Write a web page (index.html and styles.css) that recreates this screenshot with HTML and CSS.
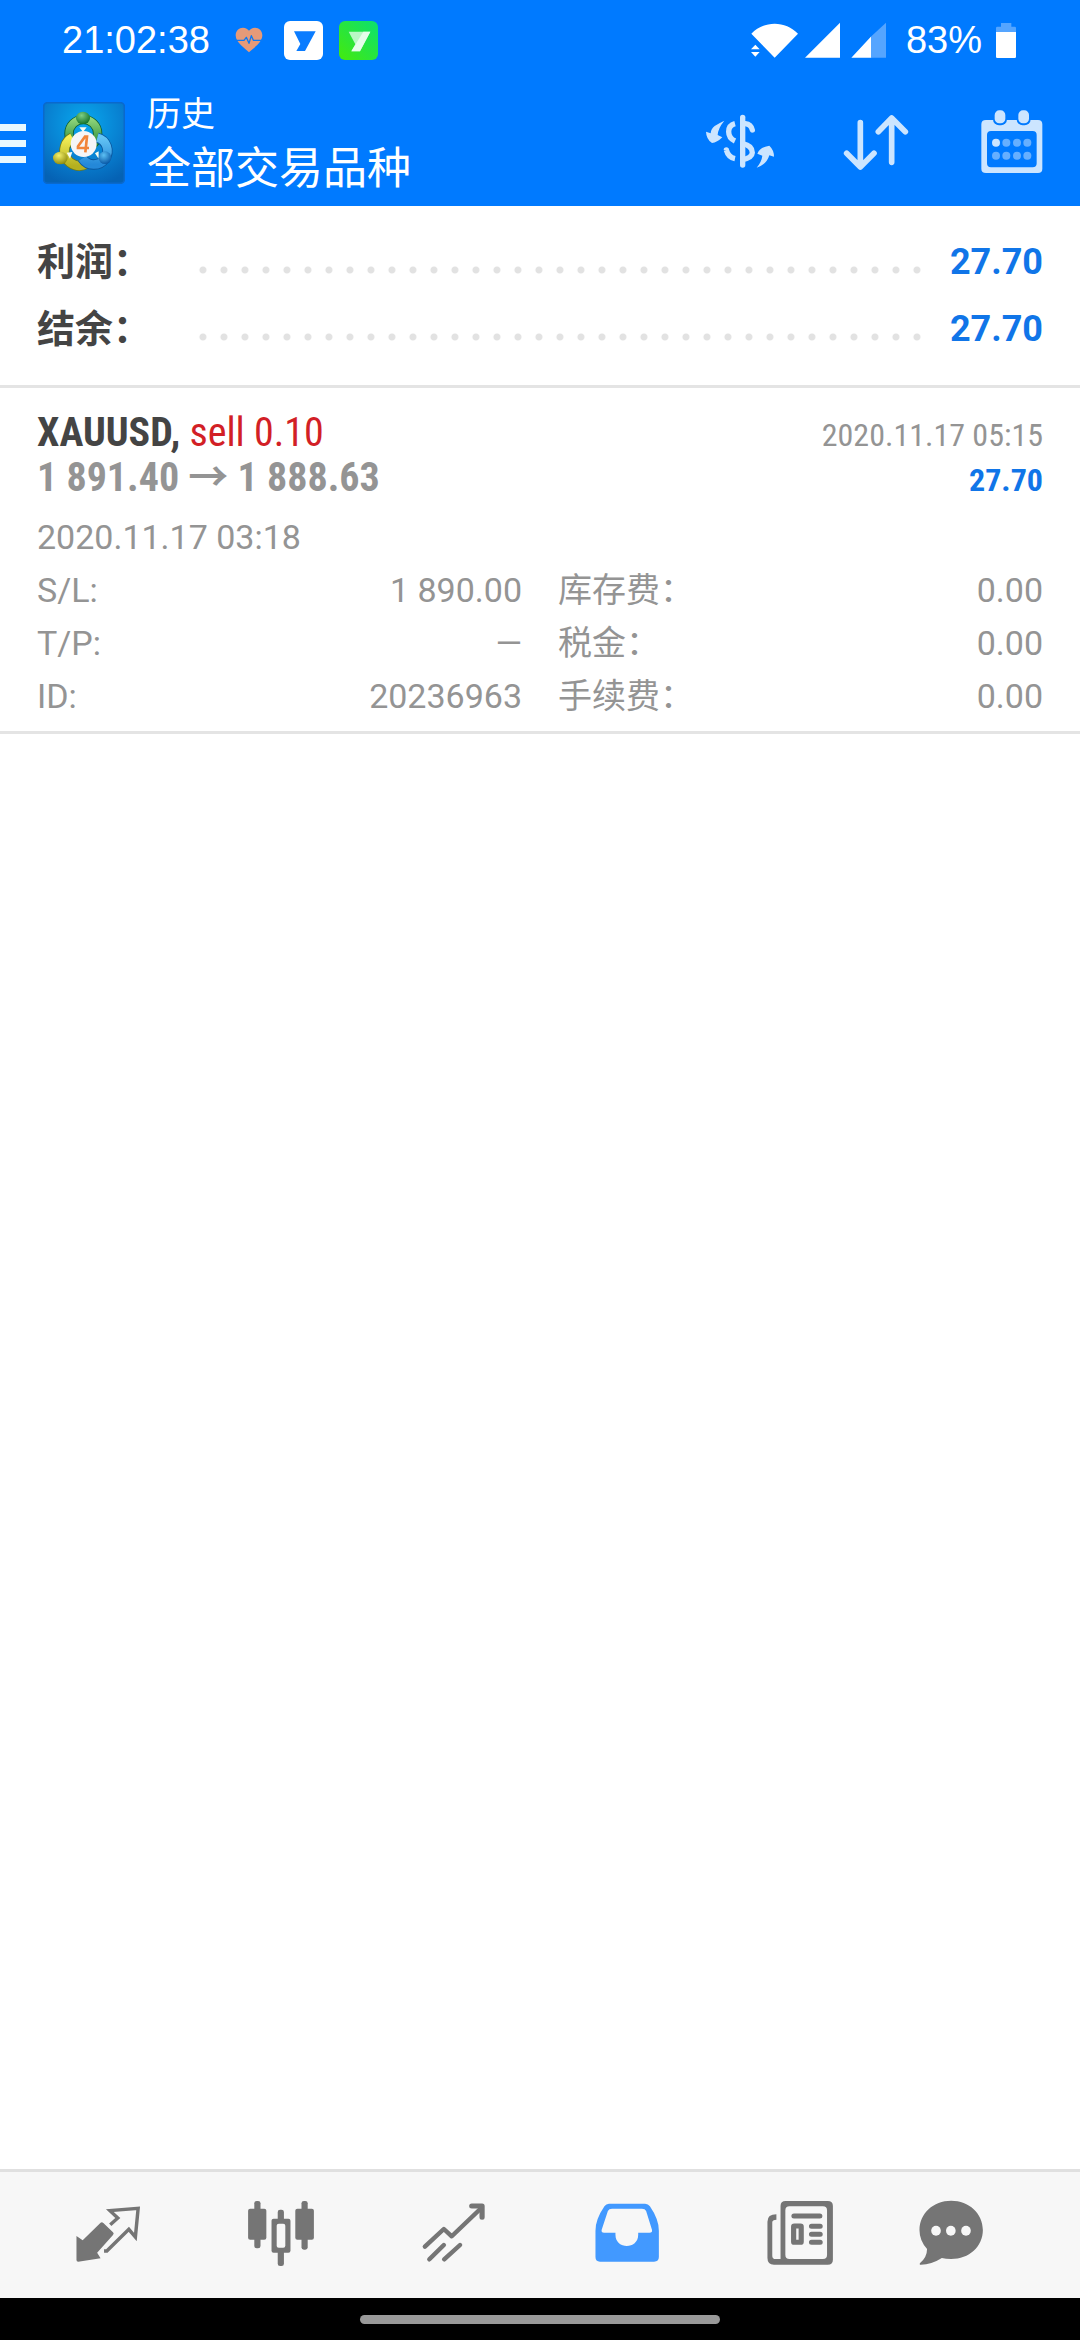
FILE: index.html
```html
<!DOCTYPE html>
<html lang="zh-CN">
<head>
<meta charset="utf-8">
<meta name="viewport" content="width=device-width, initial-scale=1">
<title>历史</title>
<link rel="stylesheet" href="styles.css">
</head>
<body>
<div class="screen">
  <header class="top">
    <div class="status">
      <time class="clock">21:02:38</time>
      <svg class="heart" viewBox="705 78 84 84" aria-hidden="true">
        <path fill="#e59a78" d="M747 157C735 145 707 128 707 106C707 92 717 83 729 83C737 83 744 88 747 92C750 88 757 83 765 83C777 83 787 92 787 106C787 128 759 145 747 157Z"/>
        <path fill="none" stroke="#0a79f5" stroke-width="4" stroke-linejoin="round" d="M705 121H732L739 112L747 130L754 107L760 121H789"/>
      </svg>
      <svg class="app-badge" viewBox="852 60 117 117" aria-hidden="true">
        <rect x="852" y="60" width="117" height="117" rx="18" fill="#fff"/>
        <path fill="#0a7cff" d="M882 91H947L915 150H889L901 129Z"/>
      </svg>
      <svg class="app-badge" viewBox="1017 60 117 117" aria-hidden="true">
        <defs><linearGradient id="lime" x1="1" y1="0" x2="0" y2="1"><stop offset="0" stop-color="#0be070"/><stop offset="1" stop-color="#44ea0c"/></linearGradient></defs>
        <rect x="1017" y="60" width="117" height="117" rx="18" fill="url(#lime)"/>
        <path fill="#b9f8c4" d="M1046 92H1111L1080 151H1054L1066 130Z"/>
        <path fill="#e6fdea" d="M1090 92H1111L1080 151H1054Z"/>
      </svg>
      <svg class="signals" viewBox="207 60 411 120" aria-hidden="true">
        <path fill="#fff" d="M211 101C248 61 314 61 351 101L281 173ZM372 173L477 68V173ZM511 173L571 109V173Z"/>
        <path fill="#007aff" d="M207 131H238L250 152L240 174H207Z"/>
        <path fill="#fff" d="M210 148L223 134L236 148ZM210 156H236L223 170Z"/>
        <path fill="#55a5ff" d="M571 109L615 68V173H571Z"/>
      </svg>
      <span class="percent">83%</span>
      <svg class="battery" viewBox="945 63 60 111" aria-hidden="true">
        <path fill="#55a5ff" d="M960 66H991V77H1001Q1005 77 1005 81V93H945V81Q945 77 949 77H960Z"/>
        <path fill="#fff" d="M945 93H1005V167Q1005 171 1001 171H949Q945 171 945 167Z"/>
      </svg>
    </div>
    <div class="appbar">
      <button class="menu" type="button" aria-label="菜单">
        <span class="burger"></span>
        <svg class="logo" viewBox="40 36 246 246" aria-hidden="true">
          <defs>
            <radialGradient id="tile" cx=".5" cy=".25" r=".8"><stop offset="0" stop-color="#08a8ee"/><stop offset=".6" stop-color="#087fd0"/><stop offset="1" stop-color="#0562b4"/></radialGradient>
            <linearGradient id="green" x1="0" y1="0" x2="0" y2="1"><stop offset="0" stop-color="#8fd479"/><stop offset="1" stop-color="#198232"/></linearGradient>
            <linearGradient id="yellow" x1="0" y1="0" x2="0" y2="1"><stop offset="0" stop-color="#f3ee57"/><stop offset="1" stop-color="#b5b01f"/></linearGradient>
            <linearGradient id="sky" x1="0" y1="0" x2="0" y2="1"><stop offset="0" stop-color="#64c4f5"/><stop offset="1" stop-color="#2488d8"/></linearGradient>
            <radialGradient id="greenBall" cx=".4" cy=".3" r=".7"><stop offset="0" stop-color="#7fcf84"/><stop offset="1" stop-color="#147329"/></radialGradient>
            <radialGradient id="yellowBall" cx=".4" cy=".3" r=".7"><stop offset="0" stop-color="#f5f06a"/><stop offset="1" stop-color="#908d10"/></radialGradient>
            <radialGradient id="blueBall" cx=".4" cy=".3" r=".7"><stop offset="0" stop-color="#5cc0f4"/><stop offset="1" stop-color="#0a5aa8"/></radialGradient>
          </defs>
          <rect x="42" y="38" width="242" height="242" rx="12" fill="url(#tile)" stroke="#0a69cc" stroke-width="5"/>
          <circle cx="161" cy="131" r="43" fill="none" stroke="#0f5c2c" stroke-width="28"/>
          <circle cx="161" cy="131" r="43" fill="none" stroke="url(#green)" stroke-width="23"/>
          <path d="M170 222A44 44 0 1 1 128 143" fill="none" stroke="#6d7a19" stroke-width="31"/>
          <path d="M170 222A44 44 0 1 1 128 143" fill="none" stroke="url(#yellow)" stroke-width="26"/>
          <path d="M158 205A41 41 0 1 0 203 143" fill="none" stroke="#0a579f" stroke-width="31"/>
          <path d="M158 205A41 41 0 1 0 203 143" fill="none" stroke="url(#sky)" stroke-width="26"/>
          <path d="M149 112H171L160 126ZM111 188L121 206L128 186ZM207 184L196 190L207 206Z" fill="#f7fbef"/>
          <ellipse cx="160" cy="84" rx="21" ry="19" fill="url(#greenBall)"/>
          <ellipse cx="92" cy="204" rx="22" ry="19" fill="url(#yellowBall)"/>
          <ellipse cx="226" cy="203" rx="19" ry="19" fill="url(#blueBall)"/>
          <circle cx="162" cy="162" r="39" fill="#f5f5f7"/>
          <path d="M167 187L172 140H166L145 169V174H178" fill="none" stroke="#f1843a" stroke-width="8"/>
        </svg>
      </button>
      <h1 class="heading"><small>历史</small><span>全部交易品种</span></h1>
      <button class="action" type="button" aria-label="品种">
        <svg viewBox="72 321 216 216" fill="none" stroke="#cce5ff" stroke-width="16" stroke-linecap="round" aria-hidden="true">
          <path d="M188 352V495"/>
          <path stroke-linecap="butt" d="M165 371Q146 376 146 395Q146 414 165 423M165 476Q145 472 139 450"/>
          <path d="M196 371Q213 373 217 390"/>
          <path stroke-linecap="butt" d="M188 431Q217 437 217 458Q216 473 188 479"/>
          <path fill="#cce5ff" stroke="none" d="M139 450m-8 0a8 8 0 0 1 16 0ZM133 362Q116 370 104 378Q93 386 92 400L78 395Q79 418 96 429Q111 428 127 412L113 405Q114 385 133 362ZM232 461Q240 441 268 437Q282 450 282 470L268 466Q260 494 230 503Q245 485 247 467Z"/>
        </svg>
      </button>
      <button class="action" type="button" aria-label="排序">
        <svg viewBox="480 321 216 216" fill="none" stroke="#cce5ff" stroke-width="17" stroke-linecap="round" stroke-linejoin="round" aria-hidden="true">
          <path d="M541 368V500M500 460L541 501L582 460M635 487V355M595 395L635 354L676 395"/>
        </svg>
      </button>
      <button class="action" type="button" aria-label="日期">
        <svg viewBox="890 321 216 216" aria-hidden="true">
          <path fill="#cce5ff" fill-rule="evenodd" d="M920 360H1076Q1089 360 1089 373V506Q1089 519 1076 519H920Q906 519 906 506V373Q906 360 920 360ZM935 393Q923 393 923 405V490Q923 502 935 502H1060Q1072 502 1072 490V405Q1072 393 1060 393Z"/>
          <rect x="941" y="327" width="42" height="49" rx="18" fill="#007aff"/>
          <rect x="1012" y="327" width="42" height="49" rx="18" fill="#007aff"/>
          <rect x="946" y="331" width="32" height="39" rx="14" fill="#cce5ff"/>
          <rect x="1017" y="331" width="32" height="39" rx="14" fill="#cce5ff"/>
          <circle cx="950" cy="428" r="12" fill="#cce5ff"/>
          <g fill="#66afff"><circle cx="981" cy="428" r="12"/><circle cx="1013" cy="428" r="12"/><circle cx="1044" cy="428" r="12"/><circle cx="950" cy="467" r="12"/><circle cx="981" cy="467" r="12"/><circle cx="1013" cy="467" r="12"/><circle cx="1044" cy="467" r="12"/></g>
        </svg>
      </button>
    </div>
  </header>

  <main class="content">
    <dl class="summary">
      <div class="summary-row"><dt>利润：</dt><dd>27.70</dd></div>
      <div class="summary-row"><dt>结余：</dt><dd>27.70</dd></div>
    </dl>
    <article class="deal">
      <div class="deal-line">
        <h2 class="symbol">XAUUSD, <span class="side">sell 0.10</span></h2>
        <time class="closed">2020.11.17 05:15</time>
      </div>
      <div class="deal-line">
        <span class="prices">1 891.40 <span class="arrow">→</span> 1 888.63</span>
        <span class="profit">27.70</span>
      </div>
      <div class="details">
        <time class="opened">2020.11.17 03:18</time>
        <dl class="fields">
          <div class="field"><dt>S/L:</dt><dd>1 890.00</dd></div>
          <div class="field"><dt>库存费：</dt><dd>0.00</dd></div>
          <div class="field"><dt>T/P:</dt><dd>—</dd></div>
          <div class="field"><dt>税金：</dt><dd>0.00</dd></div>
          <div class="field"><dt>ID:</dt><dd>20236963</dd></div>
          <div class="field"><dt>手续费：</dt><dd>0.00</dd></div>
        </dl>
      </div>
    </article>
  </main>

  <nav class="tabs">
    <button class="tab" type="button" aria-label="行情">
      <svg viewBox="208 142 209 216" preserveAspectRatio="none" aria-hidden="true">
        <path fill="#757575" d="M221 256L239 269L291 216Q295 213 299 217L327 245Q331 249 327 253L281 306L291 323L226 333Q221 333 221 328Z"/>
        <path fill="none" stroke="#757575" stroke-width="10" d="M319 222L341 202L318 180L400 173L392 259L373 236L309 301H301"/>
      </svg>
    </button>
    <button class="tab" type="button" aria-label="图表">
      <svg viewBox="709 142 209 216" preserveAspectRatio="none" fill="#757575" aria-hidden="true">
        <rect x="736" y="151" width="18" height="142" rx="7"/><rect x="718" y="174" width="53" height="93" rx="6"/>
        <rect x="873" y="151" width="18" height="146" rx="7"/><rect x="855" y="174" width="54" height="93" rx="6"/>
        <rect x="804" y="177" width="18" height="169" rx="7"/><rect x="786" y="204" width="55" height="102" rx="6"/>
        <rect x="801" y="219" width="25" height="72" rx="6" fill="#f7f7f7"/>
      </svg>
    </button>
    <button class="tab" type="button" aria-label="交易">
      <svg viewBox="1212 142 209 216" preserveAspectRatio="none" fill="none" stroke="#757575" stroke-width="13" stroke-linecap="round" stroke-linejoin="round" aria-hidden="true">
        <path d="M1232 288L1287 235L1310 257L1395 173M1245 326L1287 283M1288 326L1334 283"/>
        <path stroke-width="15" d="M1368 166H1398V200"/>
      </svg>
    </button>
    <button class="tab" type="button" aria-label="历史" aria-current="page">
      <svg viewBox="149 142 209 216" preserveAspectRatio="none" aria-hidden="true">
        <path fill="#4299ff" fill-rule="evenodd" d="M201 159H306Q315 159 320 167Q346 206 346 240V319Q346 333 332 333H175Q162 333 162 319V240Q162 206 188 167Q193 159 201 159ZM210 174Q201 174 198 181L180 237Q178 246 187 246H220V252C220 297 286 297 286 252V246H319Q328 246 326 237L309 181Q306 174 297 174Z"/>
      </svg>
    </button>
    <button class="tab" type="button" aria-label="新闻">
      <svg viewBox="655 142 209 216" preserveAspectRatio="none" fill="none" stroke="#757575" stroke-width="14" aria-hidden="true">
        <path fill="#757575" fill-rule="evenodd" stroke="none" d="M718 151H840Q855 151 855 166V327Q855 342 840 342H684Q665 342 665 322V213Q665 191 691 191V207Q679 207 679 215V315Q679 325 689 325H703V166Q703 151 718 151ZM729 167Q717 167 717 179V312Q717 325 729 325H826Q838 325 838 312V179Q838 167 826 167Z"/>
        <path stroke-linecap="round" stroke-width="15" d="M742 196H817M793 227H818M793 251H818M793 275H818"/>
        <rect x="741" y="226" width="22" height="49" rx="2" stroke-width="15"/>
      </svg>
    </button>
    <button class="tab" type="button" aria-label="聊天">
      <svg viewBox="1089 142 209 216" preserveAspectRatio="none" aria-hidden="true">
        <path fill="#757575" d="M1194 150C1246 150 1286 188 1286 238S1246 325 1194 325Q1178 325 1167 322Q1135 343 1103 342V338Q1124 320 1124 295Q1102 270 1102 238C1102 188 1142 150 1194 150Z"/>
        <g fill="#f7f7f7"><ellipse cx="1150" cy="240" rx="14" ry="15"/><ellipse cx="1193" cy="240" rx="14" ry="15"/><ellipse cx="1237" cy="240" rx="14" ry="15"/></g>
      </svg>
    </button>
  </nav>
  <div class="system"><span class="handle"></span></div>
</div>
</body>
</html>
```

FILE: styles.css
```css
* { box-sizing: border-box; }

body {
  margin: 0;
  background: #fff;
  color: #949494;
  font-family: Roboto, "Noto Sans CJK SC", sans-serif;
}

h1, h2, dl, dd { margin: 0; font-weight: 400; }

button {
  display: flex;
  align-items: center;
  justify-content: center;
  padding: 0;
  border: 0;
  background: none;
}

svg { display: block; flex: none; }

.screen {
  display: flex;
  flex-direction: column;
  min-height: 100vh;
}

/* Header */
.top {
  background: #007aff;
  color: #fff;
}

.status {
  display: flex;
  align-items: center;
  height: 80px;
  padding: 0 64px 0 62px;
  font: 38px/80px "Liberation Sans", Arial, sans-serif;
}

.heart { width: 28px; height: 28px; margin-left: 25px; }
.app-badge { width: 39px; height: 39px; margin-left: 16px; }
.heart + .app-badge { margin-left: 21px; }
.signals { width: 137px; height: 40px; margin-left: auto; }
.percent { margin: 0 14px 0 19px; }
.battery { width: 20px; height: 37px; }

.appbar {
  display: flex;
  align-items: center;
  height: 126px;
}

.menu { gap: 17px; }

.burger {
  width: 26px;
  height: 39px;
  border: solid #e8f8ff;
  border-width: 7px 0;
  background: linear-gradient(#e8f8ff, #e8f8ff) center / 26px 7px no-repeat;
}

.logo { width: 82px; height: 82px; }

.heading {
  display: flex;
  flex: 1;
  flex-direction: column;
  gap: 2px;
  margin-left: 22px;
  padding-top: 2px;
  font-size: 44px;
  line-height: 58px;
}

.heading small { font-size: 34px; line-height: 48px; }

.action { width: 136px; height: 126px; }
.action svg, .tab svg { width: 72px; height: 72px; }

/* Totals */
.content { flex: 1; }

.summary {
  padding: 23px 37px 22px;
  border-bottom: 3px solid #e4e4e4;
  font-size: 38px;
  line-height: 67px;
}

.summary-row { display: flex; }

.summary-row dt {
  min-width: 155px;
  color: #444;
  font-weight: 700;
}

.summary-row dd {
  display: flex;
  flex: 1;
  gap: 22px;
  color: #1075e8;
  font-size: 36px;
  font-weight: 700;
}

.summary-row dd::before {
  content: "";
  flex: 1;
  background: radial-gradient(circle at 10px 41px, #e2e2e2 3px, transparent 4px) right top / 21px 67px repeat-x;
}

/* Closed deal */
.deal {
  padding: 22px 37px 8px;
  border-bottom: 3px solid #e4e4e4;
}

.deal-line {
  display: flex;
  align-items: baseline;
  justify-content: space-between;
  height: 45px;
  font: 40px/45px "Roboto Condensed", "Liberation Sans Narrow", Roboto, "Noto Sans CJK SC", sans-serif;
}

.symbol { color: #444; font-size: 40px; font-weight: 700; }
.side { color: #d21f26; font-weight: 400; }
.prices { font-weight: 700; }
.arrow { font-family: "Noto Sans CJK SC", sans-serif; line-height: 1px; }
.closed, .profit { font-size: 32px; }
.profit { color: #1075e8; font-weight: 700; }

.details {
  margin-top: 11px;
  font-size: 34px;
  line-height: 53px;
}

.opened { display: block; }

.fields {
  display: grid;
  grid-template-columns: 1fr 1fr;
  column-gap: 36px;
}

.field {
  display: flex;
  justify-content: space-between;
  height: 53px;
}

/* Bottom navigation */
.tabs {
  display: grid;
  grid-template-columns: repeat(5, 173fr) 129fr;
  height: 129px;
  padding: 0 65px 3px 21px;
  border-top: 3px solid #e0e0e0;
  background: #f7f7f7;
}

.system {
  display: flex;
  align-items: center;
  justify-content: center;
  height: 42px;
  background: #000;
}

.handle {
  width: 360px;
  height: 9px;
  border-radius: 5px;
  background: #999;
}
```
